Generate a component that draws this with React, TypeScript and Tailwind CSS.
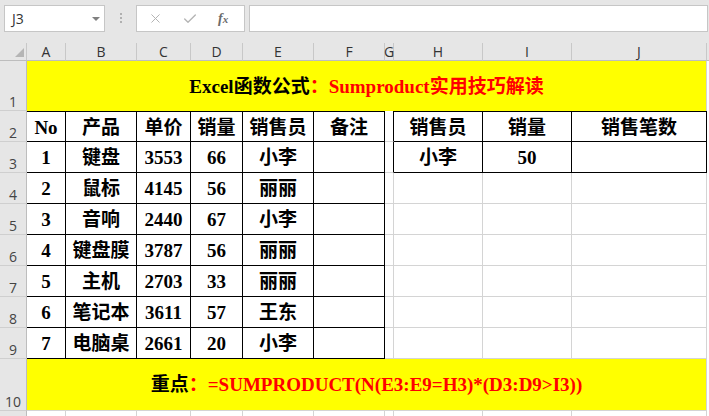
import React from "react";
import { X, Check } from "lucide-react";

const letters = ["A", "B", "C", "D", "E", "F", "G", "H", "I", "J"];

const data: string[][] = [
  ["No", "产品", "单价", "销量", "销售员", "备注", "", "销售员", "销量", "销售笔数"],
  ["1", "键盘", "3553", "66", "小李", "", "", "小李", "50", ""],
  ["2", "鼠标", "4145", "56", "丽丽", "", "", "", "", ""],
  ["3", "音响", "2440", "67", "小李", "", "", "", "", ""],
  ["4", "键盘膜", "3787", "56", "丽丽", "", "", "", "", ""],
  ["5", "主机", "2703", "33", "丽丽", "", "", "", "", ""],
  ["6", "笔记本", "3611", "57", "王东", "", "", "", "", ""],
  ["7", "电脑桌", "2661", "20", "小李", "", "", "", "", ""],
];

// rows are 1-based like the sheet, cols 0..9 = A..J
const inTable = (r: number, c: number) =>
  (r >= 2 && r <= 9 && c <= 5) || (r >= 2 && r <= 3 && c >= 7);

const uiFont = "font-['Open_Sans','Liberation_Sans',sans-serif]";
const cellFont = "font-['Liberation_Serif','Noto_Sans_CJK_SC',serif]";

const gridCols =
  "grid grid-cols-[27px_39px_71px_54px_52px_71px_71px_9px_89px_89px_135px_2px]";

const RowHead = ({ n }: { n: number }) => (
  <div
    className={`${uiFont} flex items-end justify-center pb-[1px] bg-[#e6e6e6] border-r border-b border-r-[#bdbdbd] border-b-[#cfcfcf] text-[14px] leading-none text-[#444]`}
  >
    {n}
  </div>
);

const Cell = ({ r, c, text }: { r: number; c: number; text: string }) => {
  const rightBlack = inTable(r, c) || inTable(r, c + 1);
  const bottomBlack = inTable(r, c) || inTable(r + 1, c);
  const topBlack = r === 2 && inTable(r, c);
  return (
    <div
      className={`${cellFont} flex items-center justify-center pt-[3px] bg-white border-r border-b text-[19px] font-bold text-black whitespace-nowrap ${
        rightBlack ? "border-r-black" : "border-r-[#d4d4d4]"
      } ${bottomBlack ? "border-b-black" : "border-b-[#d4d4d4]"} ${
        topBlack ? "border-t border-t-black" : ""
      }`}
    >
      {text}
    </div>
  );
};

export default function App() {
  return (
    <div className="w-[709px] h-[416px] overflow-hidden bg-[#e6e6e6] flex flex-col">
      {/* formula bar */}
      <div className="h-[43px] flex items-start pt-[5px] pl-[4px] pr-[1px]">
        <div className="w-[101px] h-[27px] bg-white border border-[#c6c6c6] flex items-center justify-between pl-[7px] pr-[4px]">
          <span className={`${uiFont} text-[14px] text-[#333]`}>J3</span>
          <svg width="8" height="4" viewBox="0 0 8 4">
            <polygon points="0,0 8,0 4,4" fill="#808080" />
          </svg>
        </div>
        <div className="ml-[15px] mt-[8px] flex flex-col gap-[2px]">
          <div className="w-[2px] h-[2px] bg-[#b0b0b0]" />
          <div className="w-[2px] h-[2px] bg-[#b0b0b0]" />
          <div className="w-[2px] h-[2px] bg-[#b0b0b0]" />
        </div>
        <div className="ml-[14px] w-[109px] h-[27px] bg-white border border-[#c6c6c6] flex items-center pl-[11px]">
          <X size={15} strokeWidth={1.6} className="text-[#b4b4b4]" />
          <Check size={16} strokeWidth={2} className="text-[#b4b4b4] ml-[19px]" />
          <span className="ml-[20px] font-['Liberation_Serif',serif] italic font-bold text-[14px] text-[#6b6b6b] leading-none">
            f<span className="text-[11px]">x</span>
          </span>
        </div>
        <div className="ml-[4px] flex-1 h-[27px] bg-white border border-[#c6c6c6]" />
      </div>

      {/* column headers */}
      <div className={`${gridCols} h-[18px]`}>
        <div className="relative border-r border-b border-r-[#c8c8c8] border-b-[#bdbdbd]">
          <svg className="absolute left-[15px] top-[5px]" width="9" height="9" viewBox="0 0 9 9">
            <polygon points="9,0 9,9 0,9" fill="#b5b5b5" />
          </svg>
        </div>
        {letters.map((l) => (
          <div
            key={l}
            className={`${uiFont} flex items-center justify-center border-r border-b border-r-[#c8c8c8] border-b-[#bdbdbd] text-[14px] leading-none text-[#333]`}
          >
            {l}
          </div>
        ))}
        <div className="border-b border-b-[#bdbdbd]" />
      </div>

      {/* sheet body */}
      <div
        className={`${gridCols} grid-rows-[50px_31px_31px_31px_31px_31px_31px_31px_31px_52px_5px] bg-white`}
      >
        <RowHead n={1} />
        <div
          className={`${cellFont} col-span-10 flex items-center justify-center pt-[3px] bg-[#ffff00] border-r border-r-[#d4d4d4] text-[19px] font-bold whitespace-nowrap`}
        >
          <span className="text-black">Excel函数公式</span>
          <span className="text-[#ff0000]">：Sumproduct实用技巧解读</span>
        </div>
        <div className="bg-white" />

        {data.map((row, i) => {
          const r = i + 2;
          return (
            <React.Fragment key={r}>
              <RowHead n={r} />
              {row.map((t, c) => (
                <Cell key={c} r={r} c={c} text={t} />
              ))}
              <div className="bg-white" />
            </React.Fragment>
          );
        })}

        <RowHead n={10} />
        <div
          className={`${cellFont} col-span-10 flex items-center justify-center pt-[1px] bg-[#ffff00] border-r border-b border-r-[#d4d4d4] border-b-[#d4d4d4] text-[19px] font-bold whitespace-nowrap`}
        >
          <span className="text-black">重点</span>
          <span className="text-[#ff0000]">：=SUMPRODUCT(N(E3:E9=H3)*(D3:D9&gt;I3))</span>
        </div>
        <div className="bg-white" />

        <div className="bg-[#e6e6e6] border-r border-r-[#bdbdbd]" />
        {letters.map((l) => (
          <div key={l} className="bg-white border-r border-r-[#d4d4d4]" />
        ))}
        <div className="bg-white" />
      </div>
    </div>
  );
}
